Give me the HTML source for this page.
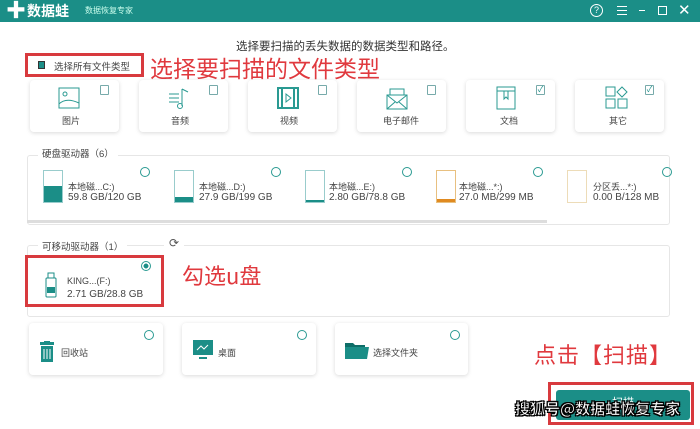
<!DOCTYPE html><html><head><meta charset="utf-8"><style>
*{margin:0;padding:0;box-sizing:border-box}
body{width:700px;height:429px;background:#fff;position:relative;overflow:hidden;font-family:"Liberation Sans","Noto Sans CJK SC",sans-serif;color:#333}
.a{position:absolute}
.t{font-size:9px;color:#444;white-space:nowrap}
.card{position:absolute;background:#fff;border-radius:4px;box-shadow:0 1px 4px rgba(0,0,0,.15)}
.cb{position:absolute;width:9px;height:10px;border:1px solid #7aa;border-radius:1px;font-size:8px;line-height:8px;text-align:center;color:#1a8f88}
.rd{position:absolute;width:10px;height:10px;border:1px solid #2a9a92;border-radius:50%}
.red{position:absolute;color:#e0393e;white-space:nowrap;font-family:"Noto Sans CJK SC",sans-serif}
.rbox{position:absolute;border:3px solid #d83a3e}
.drv{position:absolute;width:20px;height:33px;border:1px solid #9cc}
</style></head><body>
<div class="a" style="left:0;top:0;width:700px;height:22px;background:#1b8e87"></div>
<div class="a" style="left:6px;top:3px;width:16px;height:16px;color:#fff;font-size:20px;line-height:16px;font-weight:bold">✚</div>
<div class="a" style="left:27px;top:2px;color:#fff;font-size:14px;font-weight:bold;font-family:'Noto Sans CJK SC',sans-serif;line-height:18px">数据蛙</div>
<div class="a" style="left:85px;top:5px;color:#cfe;font-size:8px">数据恢复专家</div>
<div class="a" style="left:590px;top:4px;width:13px;height:13px;border:1.5px solid #fff;border-radius:50%;color:#fff;font-size:9px;line-height:10px;text-align:center">?</div>
<div class="a" style="left:617px;top:6px;width:10px;height:9px;border-top:1.5px solid #fff;border-bottom:1.5px solid #fff"></div>
<div class="a" style="left:617px;top:10px;width:10px;border-top:1.5px solid #fff"></div>
<div class="a" style="left:639px;top:10px;width:6px;border-top:1.5px solid #fff"></div>
<div class="a" style="left:658px;top:6px;width:9px;height:9px;border:1.5px solid #fff"></div>
<div class="a" style="left:678px;top:1px;color:#fff;font-size:15px">✕</div>

<div class="a" style="left:236px;top:38px;font-size:11.5px;color:#333">选择要扫描的丢失数据的数据类型和路径。</div>
<div class="rbox" style="left:25px;top:53px;width:119px;height:24px"></div>
<div class="a" style="left:38px;top:61px;width:7px;height:8px;border:1px solid #333;background:#1b8e87"></div>
<div class="a t" style="left:54px;top:59px;font-size:9.5px">选择所有文件类型</div>
<div class="red" style="left:150px;top:52px;font-size:23px;line-height:30px">选择要扫描的文件类型</div>

<div class="card" style="left:30px;top:80px;width:89px;height:52px"><div class="cb" style="left:70px;top:5px"></div><svg class="a" style="left:28px;top:7px" width="22" height="22"><rect x="1" y="1" width="20" height="20" fill="none" stroke="#2a9a92"/><circle cx="7" cy="7" r="2" fill="none" stroke="#2a9a92"/><path d="M1 17 Q8 10 21 16" fill="none" stroke="#2a9a92"/></svg><div class="t" style="position:absolute;left:32px;top:34px">图片</div></div>
<div class="card" style="left:139px;top:80px;width:89px;height:52px"><div class="cb" style="left:70px;top:5px"></div><svg class="a" style="left:28px;top:6px" width="24" height="24"><path d="M2 8h10M2 12h10M2 16h10M15 3v17M15 3l6 3" stroke="#2a9a92" fill="none"/><circle cx="13" cy="20" r="2.5" fill="none" stroke="#2a9a92"/></svg><div class="t" style="position:absolute;left:32px;top:34px">音频</div></div>
<div class="card" style="left:248px;top:80px;width:89px;height:52px"><div class="cb" style="left:70px;top:5px"></div><svg class="a" style="left:29px;top:7px" width="22" height="22"><rect x="1" y="1" width="20" height="20" fill="none" stroke="#2a9a92" stroke-width="2"/><path d="M5 1v20M17 1v20" stroke="#2a9a92" stroke-width="2"/><path d="M9 7l5 4-5 4z" fill="none" stroke="#2a9a92"/></svg><div class="t" style="position:absolute;left:32px;top:34px">视频</div></div>
<div class="card" style="left:357px;top:80px;width:89px;height:52px"><div class="cb" style="left:70px;top:5px"></div><svg class="a" style="left:28px;top:6px" width="24" height="24"><path d="M2 9h20v14H2zM2 9l10 8 10-8M5 9V3h14v6M2 23l8-7M22 23l-8-7" fill="none" stroke="#2a9a92"/></svg><div class="t" style="position:absolute;left:26px;top:34px">电子邮件</div></div>
<div class="card" style="left:466px;top:80px;width:89px;height:52px"><div class="cb" style="left:70px;top:5px">✓</div><svg class="a" style="left:30px;top:6px" width="22" height="24"><rect x="1" y="1" width="18" height="22" fill="none" stroke="#2a9a92"/><path d="M1 5h18M8 5v8l2-2 2 2V5" fill="none" stroke="#2a9a92"/></svg><div class="t" style="position:absolute;left:34px;top:34px">文档</div></div>
<div class="card" style="left:575px;top:80px;width:89px;height:52px"><div class="cb" style="left:70px;top:5px">✓</div><svg class="a" style="left:30px;top:6px" width="24" height="24"><rect x="1" y="1" width="9" height="9" fill="none" stroke="#2a9a92"/><path d="M17 1l5 5-5 5-5-5z" fill="none" stroke="#2a9a92"/><rect x="1" y="13" width="9" height="9" fill="none" stroke="#2a9a92"/><rect x="13" y="13" width="9" height="9" fill="none" stroke="#2a9a92"/></svg><div class="t" style="position:absolute;left:34px;top:34px">其它</div></div>

<div class="a" style="left:27px;top:155px;width:643px;height:70px;border:1px solid #e6e6e6;border-radius:3px"></div>
<div class="a t" style="left:38px;top:146px;background:#fff;padding:0 4px;font-size:9.5px">硬盘驱动器（6）</div>
<div class="a" style="left:27px;top:220px;width:520px;height:3px;background:#ddd"></div>

<div class="drv" style="left:43px;top:170px"><div style="position:absolute;left:0;bottom:0;width:18px;height:16px;background:#1b8e87"></div></div>
<div class="a t" style="left:68px;top:180px">本地磁...C:)</div><div class="a t" style="left:68px;top:192px;font-size:10px">59.8 GB/120 GB</div><div class="rd" style="left:140px;top:167px"></div>
<div class="drv" style="left:174px;top:170px"><div style="position:absolute;left:0;bottom:0;width:18px;height:5px;background:#1b8e87"></div></div>
<div class="a t" style="left:199px;top:180px">本地磁...D:)</div><div class="a t" style="left:199px;top:192px;font-size:10px">27.9 GB/199 GB</div><div class="rd" style="left:271px;top:167px"></div>
<div class="drv" style="left:305px;top:170px"><div style="position:absolute;left:0;bottom:0;width:18px;height:2px;background:#1b8e87"></div></div>
<div class="a t" style="left:329px;top:180px">本地磁...E:)</div><div class="a t" style="left:329px;top:192px;font-size:10px">2.80 GB/78.8 GB</div><div class="rd" style="left:402px;top:167px"></div>
<div class="drv" style="left:436px;top:170px;border-color:#e8c080"><div style="position:absolute;left:0;bottom:0;width:18px;height:3px;background:#e08a20"></div></div>
<div class="a t" style="left:459px;top:180px">本地磁...*:)</div><div class="a t" style="left:459px;top:192px;font-size:10px">27.0 MB/299 MB</div><div class="rd" style="left:533px;top:167px"></div>
<div class="drv" style="left:567px;top:170px;border-color:#eddcb8"></div>
<div class="a t" style="left:593px;top:180px">分区丢...*:)</div><div class="a t" style="left:593px;top:192px;font-size:10px">0.00 B/128 MB</div><div class="rd" style="left:662px;top:167px"></div>

<div class="a" style="left:27px;top:245px;width:643px;height:72px;border:1px solid #e6e6e6;border-radius:3px"></div>
<div class="a t" style="left:38px;top:239px;background:#fff;padding:0 4px;font-size:9.5px">可移动驱动器（1）</div>
<div class="a" style="left:164px;top:236px;width:20px;height:16px;background:#fff;color:#555;font-size:12px;text-align:center">⟳</div>
<div class="rbox" style="left:25px;top:255px;width:139px;height:52px"></div>
<svg class="a" style="left:45px;top:272px" width="12" height="26"><rect x="3" y="1" width="6" height="5" fill="none" stroke="#1b8e87"/><rect x="1" y="6" width="10" height="19" rx="1" fill="none" stroke="#1b8e87"/><rect x="2" y="15" width="8" height="6" fill="#1b8e87"/></svg>
<div class="a t" style="left:67px;top:276px">KING...(F:)</div><div class="a t" style="left:67px;top:289px;font-size:10px">2.71 GB/28.8 GB</div>
<div class="a" style="left:141px;top:261px;width:10px;height:10px;border:1px solid #2a9a92;border-radius:50%;background:radial-gradient(#1b8e87 40%,#fff 45%)"></div>
<div class="red" style="left:182px;top:260px;font-size:22px;line-height:30px">勾选u盘</div>

<div class="card" style="left:29px;top:323px;width:134px;height:52px"><div class="rd" style="left:115px;top:7px"></div><svg class="a" style="left:11px;top:18px" width="14" height="22"><rect x="0" y="1" width="14" height="3" fill="#1b8e87"/><rect x="4" y="0" width="6" height="2" fill="#1b8e87"/><rect x="1" y="5" width="12" height="16" fill="#1b8e87"/><path d="M4 8v10M7 8v10M10 8v10" stroke="#fff"/></svg><div class="t" style="position:absolute;left:32px;top:23px">回收站</div></div>
<div class="card" style="left:182px;top:323px;width:134px;height:52px"><div class="rd" style="left:115px;top:7px"></div><svg class="a" style="left:11px;top:17px" width="20" height="20"><rect x="0" y="0" width="20" height="15" fill="#1b8e87"/><path d="M4 10l4-4 3 3 4-4" stroke="#fff" fill="none"/><rect x="6" y="17" width="8" height="2" fill="#1b8e87"/></svg><div class="t" style="position:absolute;left:36px;top:23px">桌面</div></div>
<div class="card" style="left:335px;top:323px;width:133px;height:52px"><div class="rd" style="left:115px;top:7px"></div><svg class="a" style="left:10px;top:18px" width="24" height="18"><path d="M0 2h8l2 2h10v3H0z" fill="#0e6e68"/><path d="M0 6h24l-2 12H0z" fill="#1b8e87"/></svg><div class="t" style="position:absolute;left:38px;top:23px">选择文件夹</div></div>

<div class="red" style="left:534px;top:339px;font-size:22px;line-height:30px;letter-spacing:1px">点击【扫描】</div>
<div class="rbox" style="left:548px;top:382px;width:146px;height:43px"></div>
<div class="a" style="left:556px;top:390px;width:134px;height:30px;background:#1b8e87;border-radius:3px;color:#fff;font-size:11px;text-align:center;line-height:26px">扫描</div>
<div class="a" style="left:515px;top:398px;color:#fff;font-size:15px;font-weight:bold;font-family:'Noto Sans CJK SC',sans-serif;white-space:nowrap;-webkit-text-stroke:0.6px #000;text-shadow:1px 1px 0 #000,-1px -1px 0 #000,1px -1px 0 #000,-1px 1px 0 #000">搜狐号@数据蛙恢复专家</div>
</body></html>
